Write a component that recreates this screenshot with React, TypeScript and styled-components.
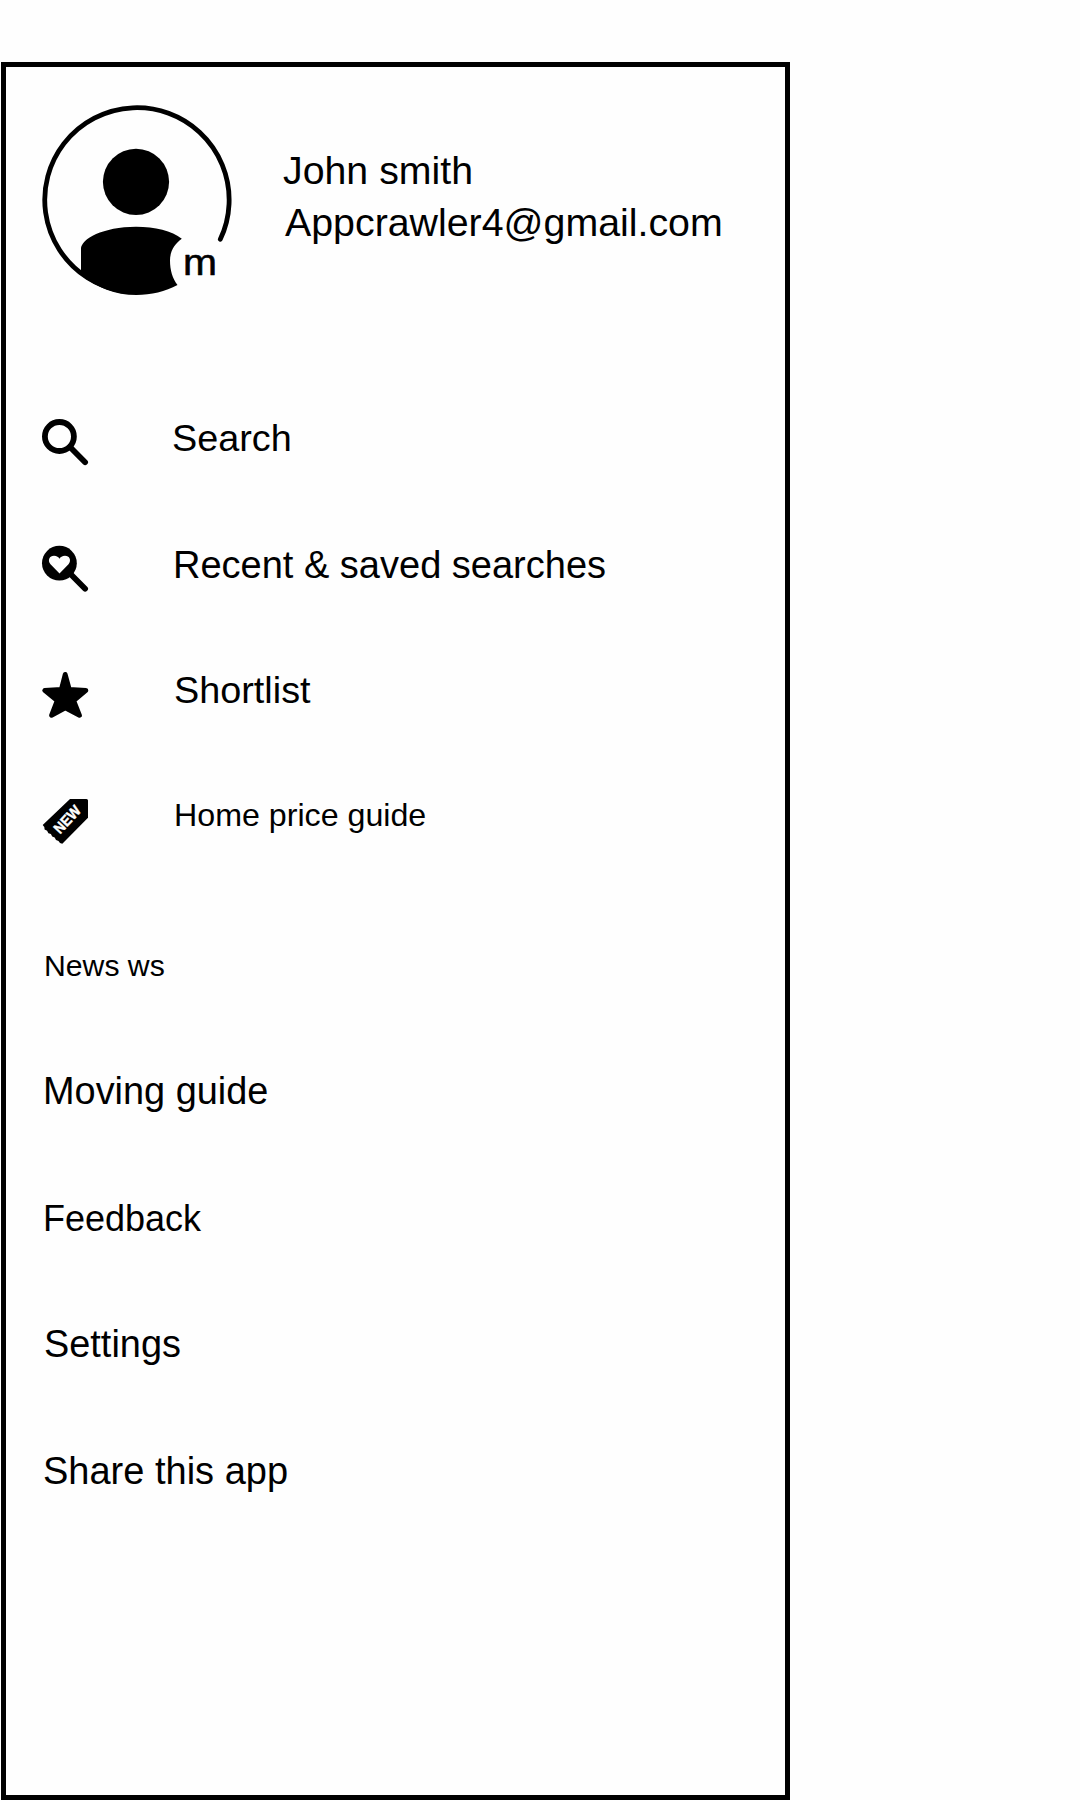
import React from "react";
import styled, { createGlobalStyle } from "styled-components";

const GlobalStyle = createGlobalStyle`
  body {
    margin: 0;
    background: #fefefe;
    color: #000;
    font-family: "Liberation Sans", Arial, sans-serif;
  }
`;

const Screen = styled.div`
  box-sizing: border-box;
  width: 1080px;
  height: 1800px;
  padding: 62px 0 0 1px;
  overflow: hidden;
`;

const Drawer = styled.aside`
  box-sizing: border-box;
  display: flex;
  flex-direction: column;
  width: 789px;
  height: 1738px;
  border: 5px solid #000;
  padding: 38px 0 0 36px;
`;

const Profile = styled.header`
  display: flex;
  height: 307px;
`;

const Identity = styled.div`
  display: flex;
  flex-direction: column;
  padding: 43px 0 0 51px;
`;

const Label = styled.span<{ $size?: number; $top?: number; $left?: number }>`
  display: block;
  font-size: ${(p) => p.$size ?? 38}px;
  line-height: 44px;
  white-space: nowrap;
  margin: ${(p) => p.$top ?? 0}px 0 0 ${(p) => p.$left ?? 0}px;
`;

const Menu = styled.nav`
  display: flex;
  flex-direction: column;
`;

const Row = styled.a<{ $height: number }>`
  display: flex;
  align-items: flex-start;
  height: ${(p) => p.$height}px;
`;

const IconBox = styled.svg`
  display: block;
  flex: none;
  width: 47px;
  height: 47px;
  margin: 7px 84px 0 0;
  overflow: visible;
`;

const AvatarArt = styled.svg`
  display: block;
  flex: none;
  width: 190px;
  height: 190px;
  overflow: visible;
`;

const Avatar = () => (
  <AvatarArt viewBox="42 105 190 190">
    <path d="M220.300 239.300A92.200 92.200 0 1 0 121.500 290.800" fill="none" stroke="#000" strokeWidth="4.800" strokeLinecap="round" />
    <circle cx="136" cy="181.8" r="33.1" />
    <path d="M81 272V249C81 239 103 226.8 136 226.8C155 226.8 172 231 181.8 238.7C174 244.5 170 251.5 170 260.5C170 270 172.5 278.5 177.5 285C165.500 291.500 151 295 136.500 295C115 295 97 287.500 81 275Z" />
    <text
      x="200"
      y="275"
      fontSize="37"
      textAnchor="middle"
      fontFamily="Liberation Sans, Arial, sans-serif"
      stroke="#000"
      strokeWidth=".6"
      strokeLinejoin="round"
      textLength="34"
      lengthAdjust="spacingAndGlyphs"
    >
      m
    </text>
  </AvatarArt>
);

const SearchIcon = () => (
  <IconBox viewBox="0 0 47 47">
    <circle cx="17.4" cy="17.5" r="14.5" fill="none" stroke="#000" strokeWidth="5.8" />
    <path d="M28 28L43.1 43.2" stroke="#000" strokeWidth="5.8" strokeLinecap="round" />
  </IconBox>
);

const SavedSearchIcon = () => (
  <IconBox viewBox="0 0 47 47">
    <circle cx="17.4" cy="17.2" r="17.4" />
    <path d="M28 27.500L43.100 42.700" stroke="#000" strokeWidth="5.800" strokeLinecap="round" />
    <path d="M17.500 27.500L8.500 18.300C5.200 14.200 7.600 9.800 12 9.800C14.800 9.800 16.600 11.200 17.500 12.800C18.400 11.200 20.200 9.800 23 9.800C27.400 9.800 29.800 14.200 26.500 18.300Z" fill="#fefefe" />
  </IconBox>
);

const StarIcon = () => (
  <IconBox viewBox="0 0 47 47">
    <path
      d="M23.200 2.400L27.300 17.500L43.900 18.400L31.700 28.600L37.500 43.300L23.300 35.800L9.500 43.300L15.200 28.600L2.700 18.400L19.300 17.500Z"
      stroke="#000"
      strokeWidth="4.800"
      strokeLinejoin="round"
    />
  </IconBox>
);

const NewTagIcon = () => (
  <IconBox viewBox="0 0 47 47">
    <path d="M28 0H44.500Q46 0 46 1.500V18.700L20.300 44.800L18 44L16.500 41.900L14 41L12.700 38.500L10.200 37.600L8.900 35.100L6.400 34.200L5.100 31.700L2.600 30.600L2.300 28L.7 26Z" />
    <text
      x="0"
      y="0"
      transform="translate(28.800 24) rotate(-47)"
      fill="#fefefe"
      stroke="#fefefe"
      strokeWidth=".4"
      fontSize="15"
      fontWeight="700"
      textAnchor="middle"
      fontFamily="Liberation Sans, Arial, sans-serif"
      textLength="32"
      lengthAdjust="spacingAndGlyphs"
    >
      NEW
    </text>
  </IconBox>
);

const primary = [
  { label: "Search", Icon: SearchIcon, height: 127, top: 4, left: -1, size: 37.8 },
  { label: "Recent & saved searches", Icon: SavedSearchIcon, height: 126, top: 4, left: 0, size: 38 },
  { label: "Shortlist", Icon: StarIcon, height: 127, top: 3, left: 1, size: 37.8 },
  { label: "Home price guide", Icon: NewTagIcon, height: 145, top: 1, left: 1, size: 32.2 },
];

const secondary = [
  { label: "News ws", height: 127, top: 7, left: 2, size: 30.2 },
  { label: "Moving guide", height: 127, top: 5, left: 1, size: 37.9 },
  { label: "Feedback", height: 127, top: 6, left: 1, size: 36 },
  { label: "Settings", height: 127, top: 4, left: 2, size: 37.9 },
  { label: "Share this app", height: 127, top: 4, left: 1, size: 38 },
];

export default function App() {
  return (
    <>
      <GlobalStyle />
      <Screen>
        <Drawer>
          <Profile>
            <Avatar />
            <Identity>
              <Label $size={39.3}>John smith</Label>
              <Label $size={39.35} $top={8} $left={2}>Appcrawler4@gmail.com</Label>
            </Identity>
          </Profile>
          <Menu>
            {primary.map(({ label, Icon, height, top, left, size }) => (
              <Row key={label} $height={height}>
                <Icon />
                <Label $size={size} $top={top} $left={left}>{label}</Label>
              </Row>
            ))}
          </Menu>
          <Menu>
            {secondary.map(({ label, height, top, left, size }) => (
              <Row key={label} $height={height}>
                <Label $size={size} $top={top} $left={left}>{label}</Label>
              </Row>
            ))}
          </Menu>
        </Drawer>
      </Screen>
    </>
  );
}
